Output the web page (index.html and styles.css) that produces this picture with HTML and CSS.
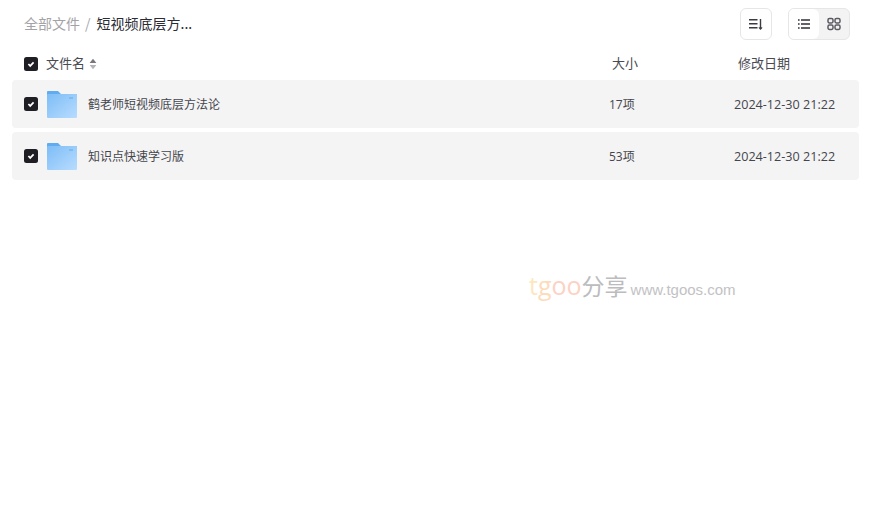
FILE: index.html
```html
<!DOCTYPE html>
<html lang="zh-CN">
<head>
    <meta charset="UTF-8">
    <title>全部文件</title>
    <link rel="stylesheet" href="styles.css">
</head>
<body>
    <div class="page">
        <div class="toolbar">
            <div class="crumbs">
                <span class="crumb-root">全部文件</span>
                <span class="crumb-sep">/</span>
                <span class="crumb-current">短视频底层方...</span>
            </div>
            <div class="tools">
                <div class="tool-btn">
                    <svg width="16" height="16" viewBox="0 0 16 16" fill="none" stroke="#3a3a42" stroke-width="1.4">
                        <path d="M1 3.7h8.5M1 7.7h8.5M1 11.7h8.5"/>
                        <path d="M12.5 3v9.5"/>
                        <path d="M10.9 11.4l1.6 1.8 1.6-1.8" stroke-width="1.1"/>
                    </svg>
                </div>
                <div class="view-switch">
                    <div class="view-btn active">
                        <svg width="14" height="14" viewBox="0 0 14 14" fill="none" stroke="#2f2f37" stroke-width="1.4">
                            <path d="M1 3h1.6M4 3h9M1 7h1.6M4 7h9M1 11h1.6M4 11h9"/>
                        </svg>
                    </div>
                    <div class="view-btn">
                        <svg width="14" height="14" viewBox="0 0 14 14" fill="none" stroke="#5a5a62" stroke-width="1.5">
                            <rect x="1" y="1.5" width="5" height="4.5" rx="1.4"/>
                            <rect x="8" y="1.5" width="5" height="4.5" rx="1.4"/>
                            <rect x="1" y="8" width="5" height="4.5" rx="1.4"/>
                            <rect x="8" y="8" width="5" height="4.5" rx="1.4"/>
                        </svg>
                    </div>
                </div>
            </div>
        </div>

        <div class="head-row">
            <span class="check"><svg width="10" height="10" viewBox="0 0 10 10"><path d="M2.4 5l1.8 1.9 3.4-3.6" fill="none" stroke="#fff" stroke-width="1.7"/></svg></span>
            <span class="head-name">文件名</span>
            <svg class="sort-icon" width="8" height="12" viewBox="0 0 8 12">
                <path d="M4 .8L7.4 5H.6z" fill="#77777c"/>
                <path d="M4 11.2L.6 7h6.8z" fill="#b4b4b8"/>
            </svg>
            <span class="head-size">大小</span>
            <span class="head-date">修改日期</span>
        </div>

        <div class="file-list">
            <div class="file-row">
                <span class="check"><svg width="10" height="10" viewBox="0 0 10 10"><path d="M2.4 5l1.8 1.9 3.4-3.6" fill="none" stroke="#fff" stroke-width="1.7"/></svg></span>
                <svg class="folder" width="30" height="28" viewBox="0 0 30 28">
                    <path d="M0 2a1 1 0 0 1 1-1h10l3 3h15a1 1 0 0 1 1 1v3H0z" fill="#5fadf0"/>
                    <rect y="4" width="30" height="24" rx="1" fill="url(#fold)"/>
                    <rect x="22" y="7" width="4" height="2" fill="#7dbcf3"/>
                    <defs>
                        <linearGradient id="fold" x1="0" y1="0" x2="1" y2="1">
                            <stop offset="0" stop-color="#7dbdf6"/>
                            <stop offset="1" stop-color="#b8dcff"/>
                        </linearGradient>
                    </defs>
                </svg>
                <span class="file-name">鹤老师短视频底层方法论</span>
                <span class="file-size">17项</span>
                <span class="file-date">2024-12-30 21:22</span>
            </div>
            <div class="file-row">
                <span class="check"><svg width="10" height="10" viewBox="0 0 10 10"><path d="M2.4 5l1.8 1.9 3.4-3.6" fill="none" stroke="#fff" stroke-width="1.7"/></svg></span>
                <svg class="folder" width="30" height="28" viewBox="0 0 30 28">
                    <path d="M0 2a1 1 0 0 1 1-1h10l3 3h15a1 1 0 0 1 1 1v3H0z" fill="#5fadf0"/>
                    <rect y="4" width="30" height="24" rx="1" fill="url(#fold)"/>
                    <rect x="22" y="7" width="4" height="2" fill="#7dbcf3"/>
                </svg>
                <span class="file-name">知识点快速学习版</span>
                <span class="file-size">53项</span>
                <span class="file-date">2024-12-30 21:22</span>
            </div>
        </div>

        <div class="watermark">
            <span class="wm-t">t</span><span class="wm-g">g</span><span class="wm-o">oo</span><span class="wm-cn">分享</span><span class="wm-url">www.tgoos.com</span>
        </div>
    </div>
</body>
</html>
```

FILE: styles.css
```css
html, body {
    margin: 0;
    background-color: #fff;
}
body {
    font-family: "Noto Sans CJK SC", "Open Sans", sans-serif;
    color: #34343c;
    overflow: hidden;
}
.page {
    width: 874px;
    height: 514px;
    padding: 8px 15px 0 12px;
    box-sizing: border-box;
}

.toolbar {
    display: flex;
    align-items: center;
    justify-content: space-between;
    height: 32px;
    padding: 0 9px 0 12px;
}
.crumbs {
    display: flex;
    align-items: center;
    font-size: 14px;
    line-height: 18px;
    margin-bottom: 2px;
}
.crumb-root {
    color: #a3a3a6;
}
.crumb-sep {
    color: #a3a9b0;
    margin: 0 6px 0 5px;
}
.crumb-current {
    color: #2b2b33;
    font-size: 14px;
}
.tools {
    display: flex;
    align-items: center;
    gap: 16px;
}
.tool-btn {
    width: 30px;
    height: 30px;
    display: flex;
    align-items: center;
    justify-content: center;
    border: 1px solid #e6e6e8;
    border-radius: 6px;
}
.view-switch {
    display: flex;
    width: 60px;
    height: 30px;
    border: 1px solid #e6e6e8;
    border-radius: 6px;
    overflow: hidden;
    background-color: #f3f3f4;
}
.view-btn {
    width: 30px;
    display: flex;
    align-items: center;
    justify-content: center;
}
.view-btn.active {
    background-color: #fff;
    border-radius: 0 6px 6px 0;
}

.head-row {
    display: flex;
    align-items: center;
    height: 40px;
    box-sizing: border-box;
    padding: 8px 0 0 12px;
    font-size: 13px;
    color: #4a4a52;
}
.check {
    flex: none;
    width: 14px;
    height: 14px;
    display: flex;
    align-items: center;
    justify-content: center;
    background-color: #1e1e24;
    border-radius: 2.5px;
}
.head-name {
    margin: 0 0 4px 8px;
}
.sort-icon {
    margin-left: 4px;
}
.head-size {
    margin: 0 0 4px 515px;
}
.head-date {
    margin: 0 0 4px 100px;
}

.file-list {
    display: flex;
    flex-direction: column;
    gap: 4px;
}
.file-row {
    display: flex;
    align-items: center;
    height: 48px;
    padding-left: 12px;
    background-color: #f4f4f4;
    border-radius: 4px;
    font-size: 12px;
    color: #45454d;
}
.folder {
    flex: none;
    margin-left: 9px;
}
.file-name {
    width: 521px;
    margin: 0 0 2px 11px;
}
.file-size {
    width: 125px;
    font-family: "Open Sans", "Noto Sans CJK SC", sans-serif;
}
.file-date {
    font-family: "Open Sans", sans-serif;
    font-size: 12.6px;
}

.watermark {
    display: flex;
    align-items: baseline;
    margin: 88px 0 0 517px;
    font-family: "Open Sans", "Noto Sans CJK SC", sans-serif;
    font-size: 25px;
    line-height: 34px;
}
.wm-t {
    color: #fde7bf;
}
.wm-g {
    color: #fddcbc;
}
.wm-o {
    color: #fcd2c4;
}
.wm-cn {
    color: #bcbcbe;
    font-family: "Noto Sans CJK SC", sans-serif;
    font-size: 23px;
}
.wm-url {
    color: #c2c2c4;
    font-family: "Liberation Sans", sans-serif;
    font-size: 15px;
    margin-left: 3px;
}
```
